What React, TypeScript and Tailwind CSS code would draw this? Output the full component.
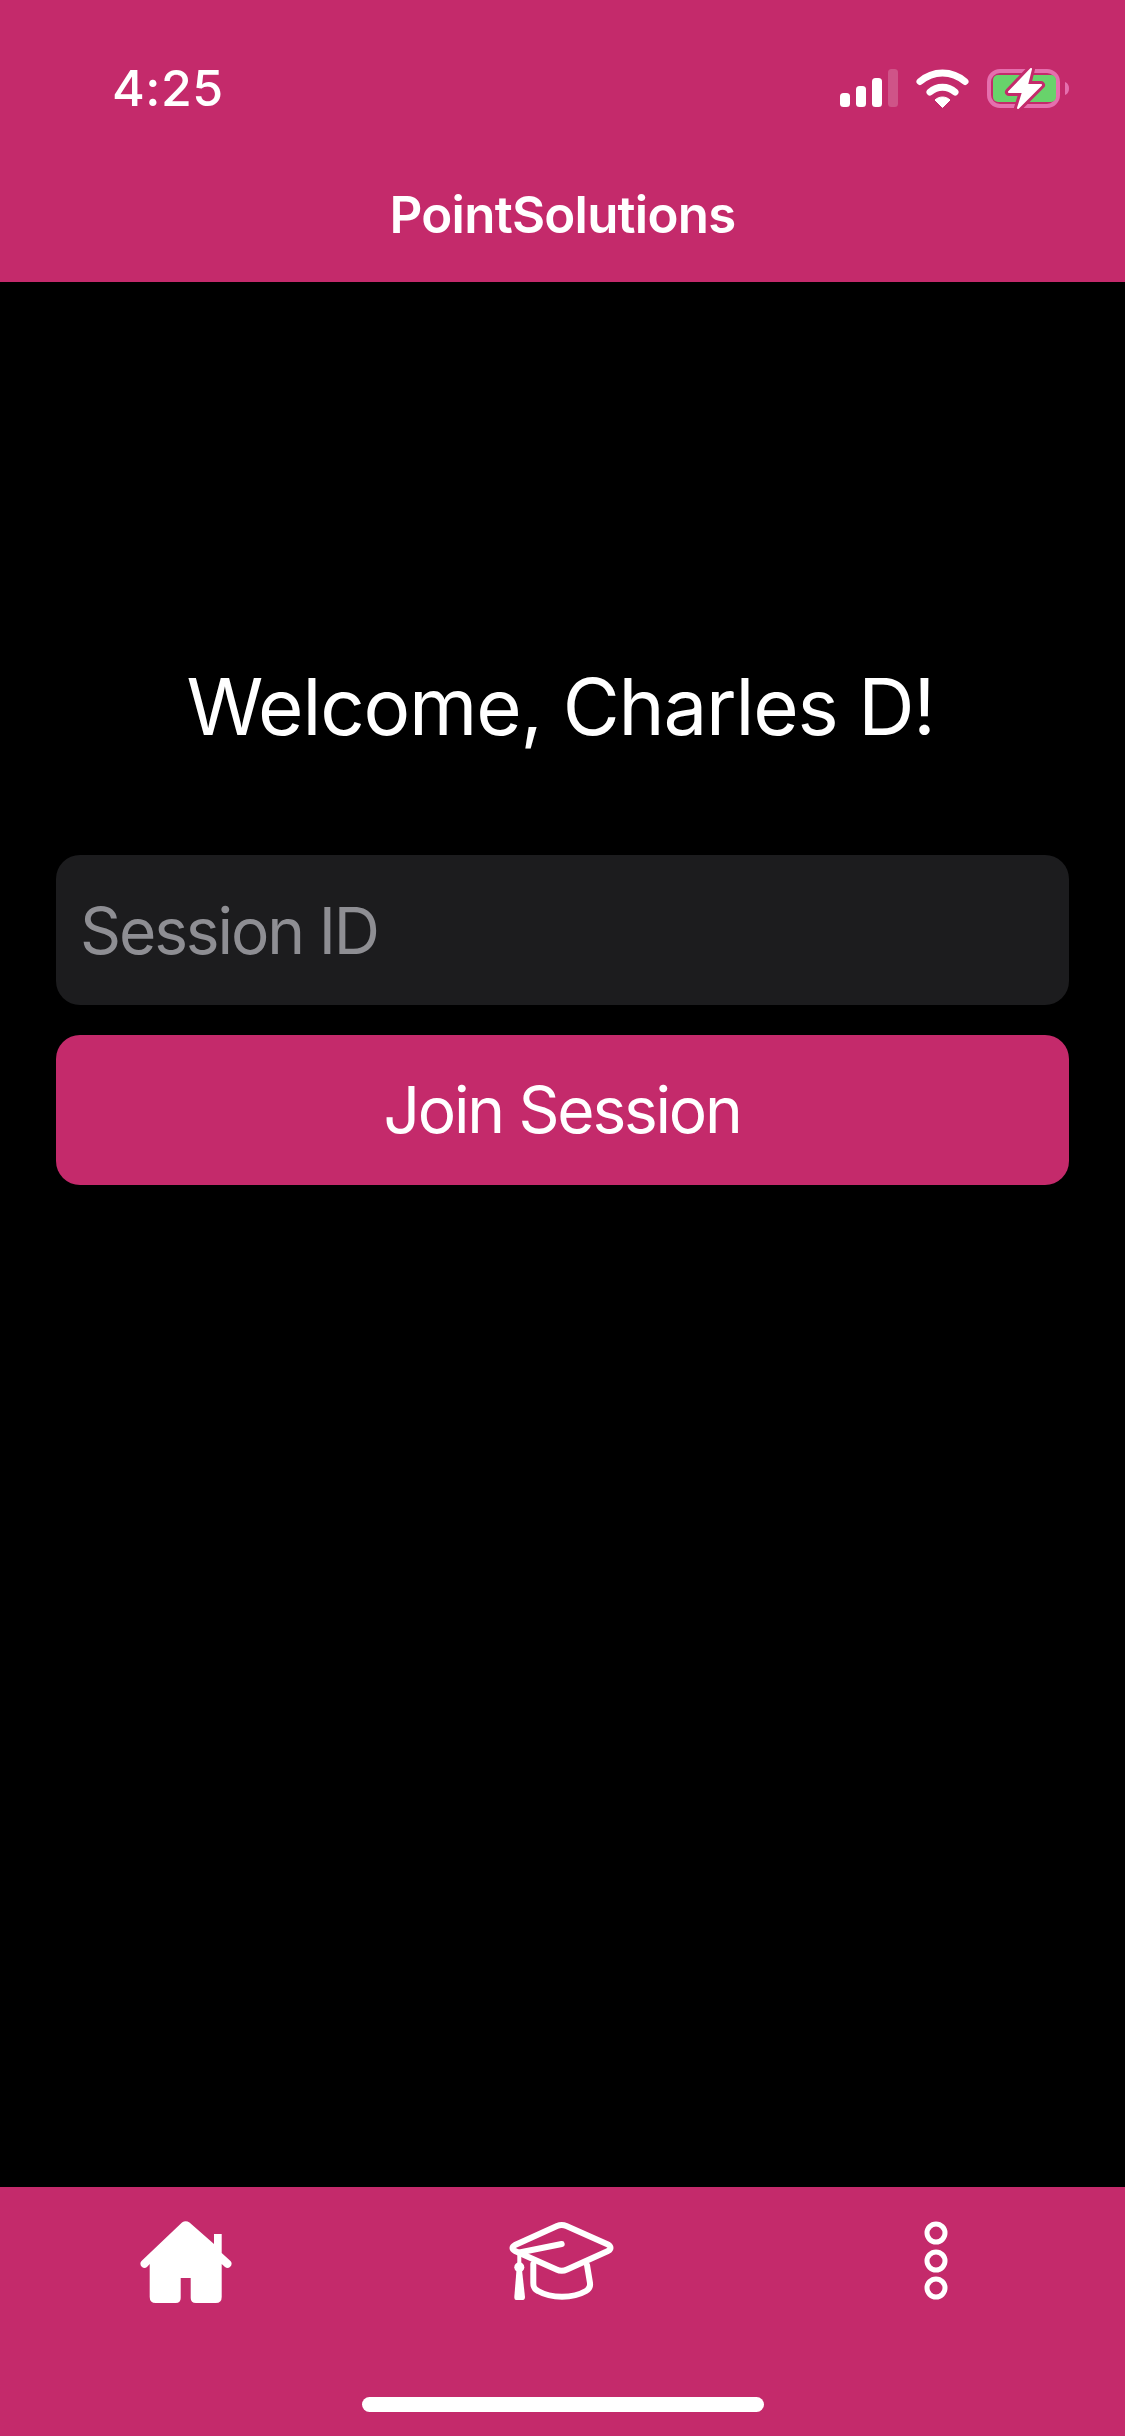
const font = "font-['Inter','Noto_Sans',sans-serif]";

function StatusIcons() {
  return (
    <svg width="230" height="46" viewBox="0 0 230 46" fill="none">
      {/* signal */}
      <rect x="0" y="27" width="10" height="14" rx="3.500" fill="#fff" />
      <rect x="16" y="20" width="10" height="21" rx="3.500" fill="#fff" />
      <rect x="32" y="12" width="10" height="29" rx="3.500" fill="#fff" />
      <rect x="48" y="3" width="10" height="38" rx="3.500" fill="#fff" fillOpacity="0.2" />
      {/* wifi */}
      <path d="M80 15.500C93 4 112 4 125 15.500" stroke="#fff" strokeWidth="7" strokeLinecap="round" />
      <path d="M90 26C97 19.500 108 19.500 115 26" stroke="#fff" strokeWidth="7" strokeLinecap="round" />
      <path d="M95 34C99 30 106 30 110 34L102.500 41.500Z" fill="#fff" stroke="#fff" strokeWidth="1" strokeLinejoin="round" />
      {/* battery */}
      <rect x="149" y="5" width="69" height="35" rx="11" stroke="#e56fae" strokeWidth="4" />
      <rect x="153" y="9" width="63" height="27" rx="5" fill="#68d36b" />
      <path d="M225 16C228 17 229 20 229 22.500C229 25 228 28 225 29Z" fill="#e56fae" />
      <path
        d="M191 3L169 26H183L178 42L201 19H187Z"
        fill="#fff"
        stroke="#c42a6b"
        strokeWidth="8"
        strokeLinejoin="round"
        paintOrder="stroke"
      />
      <path d="M191 3L169 26H183L178 42L201 19H187Z" fill="#fff" stroke="#fff" strokeWidth="2" strokeLinejoin="round" />
    </svg>
  );
}

function HomeIcon() {
  return (
    <svg width="94" height="84" viewBox="0 0 94 84" fill="#fff">
      <path d="M43 2.500Q46.700 0 50.500 2.500L75 24V14H82.700V33L91.500 41Q94 44 91 47Q88.500 49 86 47L82.700 44V77Q82.700 83 76.700 83H57Q51.700 83 51.700 78V58H41.700V78Q41.700 83 36.700 83H16.700Q10.700 83 10.700 77V44L8 47Q5.500 49 3 47Q0 44 2.500 41Z" />
    </svg>
  );
}

function CapIcon() {
  return (
    <svg width="108" height="82" viewBox="0 0 108 82" fill="none" stroke="#fff" strokeWidth="6" strokeLinecap="round" strokeLinejoin="round">
      <path d="M50 6Q54.700 4 59.400 6L101 24.500Q106 28 101 31L60 49.500Q54.700 52 49.500 49.500L8 31Q3 28 8 25Z" />
      <path d="M12.500 32.500L54.700 24" />
      <path d="M26.300 44V63C26.300 67 27 69 31 71C44 78.500 66 78.500 79 71C82.500 69 83.500 67 83 63L80 45" />
      <path d="M12.300 33V44" strokeWidth="4" />
      <circle cx="12.300" cy="47.300" r="5" fill="#fff" stroke="none" />
      <path d="M9.500 50H15L18 77C18 79 17 80 16 80H9C8 80 7.300 79 7.300 77Z" fill="#fff" stroke="none" />
    </svg>
  );
}

function MoreIcon() {
  return (
    <svg width="24" height="80" viewBox="0 0 24 80" fill="none" stroke="#fff" strokeWidth="5">
      <circle cx="12" cy="12" r="9" />
      <circle cx="12" cy="40" r="9" />
      <circle cx="12" cy="67" r="9" />
    </svg>
  );
}

export default function App() {
  return (
    <div className={`flex h-[2436px] w-[1125px] flex-col overflow-hidden bg-black ${font}`}>
      <header className="flex h-[282px] flex-col bg-[#c42a6b] text-white">
        <div className="flex h-[183px] items-start justify-between pl-[112px] pr-[55px]">
          <span className="pt-[56px] text-[50px] leading-[64px] font-medium tracking-[0.01em]">4:25</span>
          <span className="pt-[66px]">
            <StatusIcons />
          </span>
        </div>
        <h1 className="text-center text-[51px] leading-[64px] font-semibold tracking-[-0.015em]">PointSolutions</h1>
      </header>

      <main className="flex flex-1 flex-col px-[56px] pt-[379px]">
        <h2 className="pr-[4px] text-center text-[78px] leading-[92px] font-normal tracking-[-0.015em] text-white">
          Welcome, Charles D!
        </h2>
        <input
          placeholder="Session ID"
          className="mt-[102px] h-[150px] w-full rounded-[24px] bg-[#1c1c1e] px-[24px] text-[64px] tracking-[-0.033em] text-white outline-none placeholder:text-[#8e8e93]"
        />
        <button className="mt-[30px] h-[150px] w-full rounded-[24px] bg-[#c42a6b] pr-[1px] text-[64px] tracking-[-0.035em] text-white">
          Join Session
        </button>
      </main>

      <nav className="flex h-[249px] flex-col bg-[#c42a6b]">
        <div className="grid grid-cols-3 items-center pt-[33px]">
          <div className="flex h-[84px] justify-center pr-[4px]">
            <HomeIcon />
          </div>
          <div className="flex h-[84px] justify-center pr-[4px]">
            <CapIcon />
          </div>
          <div className="flex h-[84px] justify-center pr-[3px] pt-[1px]">
            <MoreIcon />
          </div>
        </div>
        <div className="mt-[93px] h-[15px] w-[402px] self-center rounded-full bg-white" />
      </nav>
    </div>
  );
}
